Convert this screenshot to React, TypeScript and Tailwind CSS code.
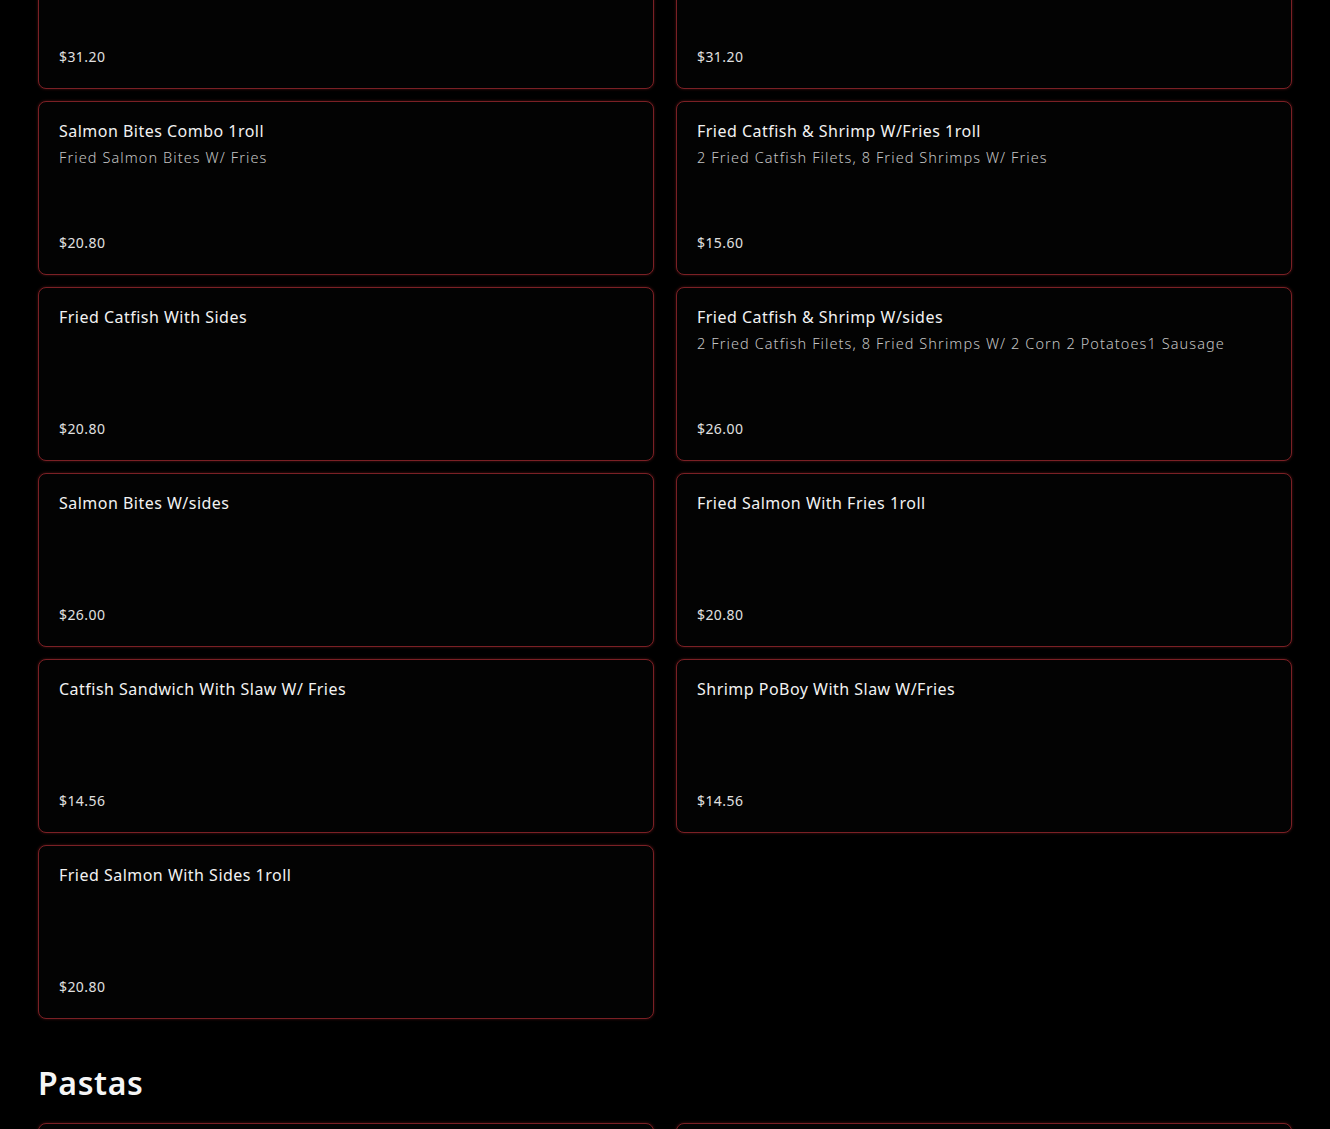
import React from "react";

type Item = { name: string; desc?: string; price: string };

const rows: Item[] = [
  { name: "", price: "$31.20" },
  { name: "", price: "$31.20" },
  { name: "Salmon Bites Combo 1roll", desc: "Fried Salmon Bites W/ Fries", price: "$20.80" },
  { name: "Fried Catfish & Shrimp W/Fries 1roll", desc: "2 Fried Catfish Filets, 8 Fried Shrimps W/ Fries", price: "$15.60" },
  { name: "Fried Catfish With Sides", price: "$20.80" },
  { name: "Fried Catfish & Shrimp W/sides", desc: "2 Fried Catfish Filets, 8 Fried Shrimps W/ 2 Corn 2 Potatoes1 Sausage", price: "$26.00" },
  { name: "Salmon Bites W/sides", price: "$26.00" },
  { name: "Fried Salmon With Fries 1roll", price: "$20.80" },
  { name: "Catfish Sandwich With Slaw W/ Fries", price: "$14.56" },
  { name: "Shrimp PoBoy With Slaw W/Fries", price: "$14.56" },
  { name: "Fried Salmon With Sides 1roll", price: "$20.80" },
];

function Card({ item }: { item: Item }) {
  return (
    <div className="h-[174px] rounded-[8px] border border-[#7a2025] bg-[#030303] shadow-[0_0_3px_rgba(160,40,40,0.45)] px-5 pt-[17px] pb-[19px] flex flex-col">
      <div className="text-[16px] leading-[24px] tracking-[0.03em] text-[#f2f2f2]">{item.name}</div>
      {item.desc && (
        <div className="mt-[2px] text-[14.5px] leading-[24px] tracking-[0.075em] font-light text-[#c4c4c4]">{item.desc}</div>
      )}
      <div className="mt-auto text-[14px] leading-[24px] tracking-[0.03em] text-[#e0e0e0]">{item.price}</div>
    </div>
  );
}

export default function App() {
  return (
    <div className="h-[1129px] overflow-hidden bg-black" style={{ fontFamily: '"Noto Sans", "Open Sans", sans-serif' }}>
      <div className="px-[38px] -mt-[85px]">
        <div className="grid grid-cols-2 gap-x-[22px] gap-y-[12px]">
          {rows.map((r, i) => (
            <Card key={i} item={r} />
          ))}
        </div>
        <h2 className="mt-[44px] text-[32px] leading-[40px] font-semibold tracking-[0.02em] text-[#f5f5f5]">Pastas</h2>
        <div className="mt-[20px] grid grid-cols-2 gap-x-[22px]">
          <div className="h-[174px] rounded-[8px] border border-[#7a2025] bg-[#030303] shadow-[0_0_3px_rgba(160,40,40,0.45)]" />
          <div className="h-[174px] rounded-[8px] border border-[#7a2025] bg-[#030303] shadow-[0_0_3px_rgba(160,40,40,0.45)]" />
        </div>
      </div>
    </div>
  );
}
